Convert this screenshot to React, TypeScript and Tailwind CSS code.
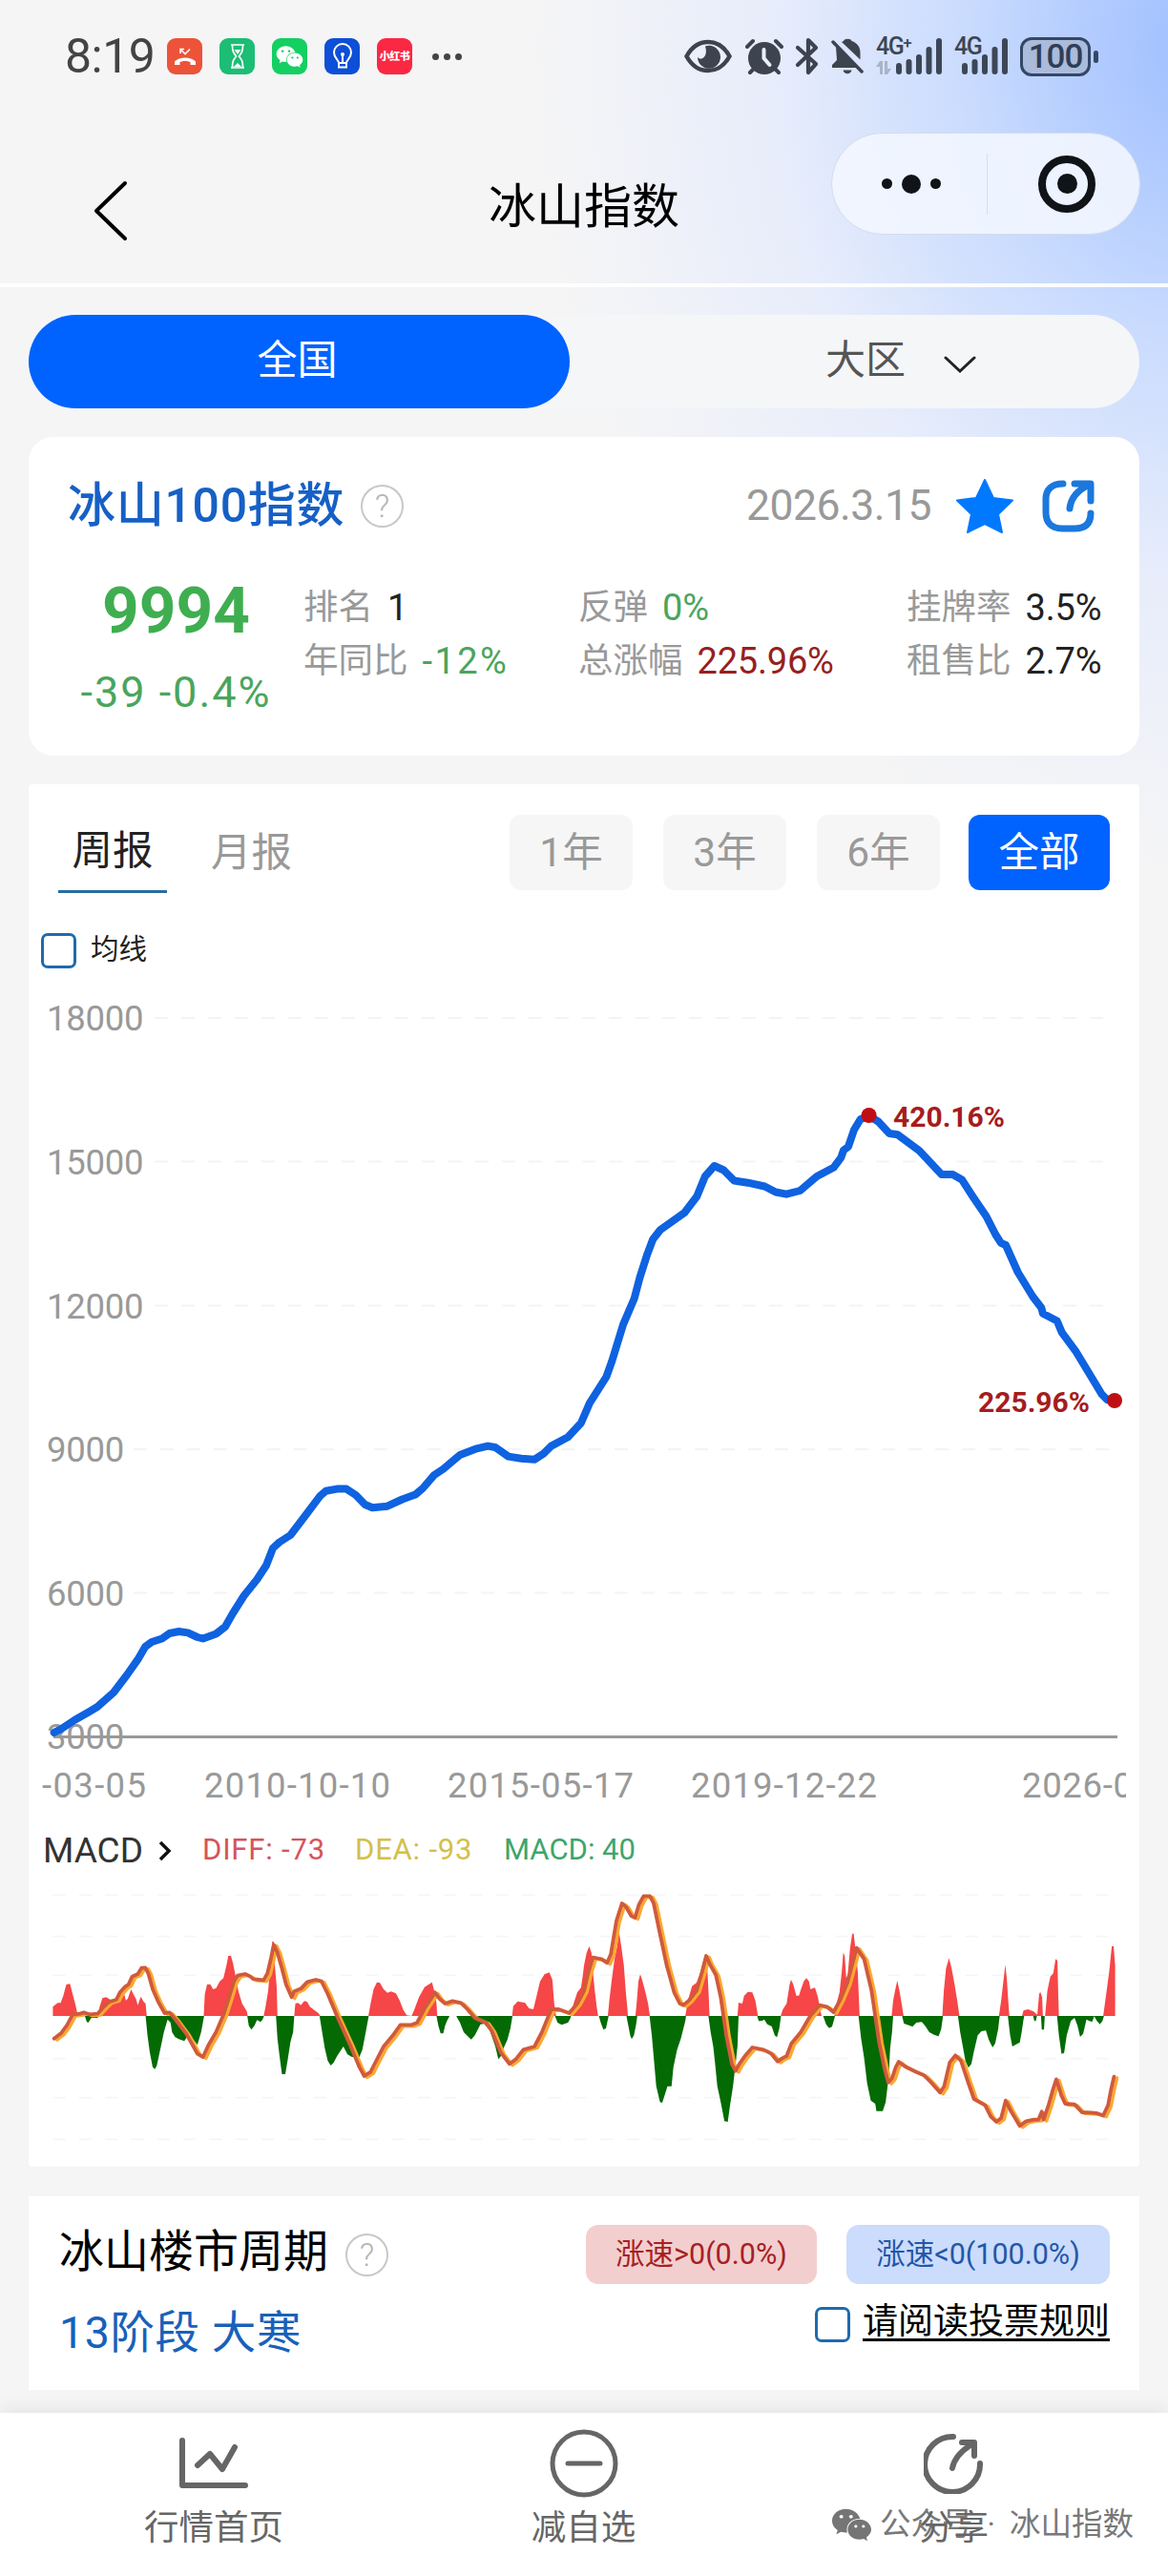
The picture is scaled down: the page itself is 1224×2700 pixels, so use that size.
import { ReactNode } from "react";
import clsx from "clsx";
import { FaWeixin } from "react-icons/fa";

type Point = [number, number]

const pricePoints : Point[] = [
    [56.6,1816],[64.4,1812],[78,1803],[93.7,1794],[102,1789],[119,1774],[132.7,1756],[144.4,1739.4],[152.2,1726],[159,1721],
    [169.8,1717.5],[177.6,1712],[187.4,1710],[197,1711.4],[206.9,1716],[212.7,1717.5],[226.4,1712.5],[236,1705],[244,1691],
    [255.7,1672.5],[269.3,1655.5],[279,1640.7],[286,1622.6],[292.7,1616.5],[304.4,1609],[320,1588.5],[335.7,1567.7],[341.5,1562.8],
    [353.2,1560.6],[363,1560.6],[372.8,1567],[382.5,1577],[390.3,1580.3],[406,1578.7],[421.5,1571.5],[435.2,1566.6],[443,1560],
    [454.7,1546.3],[464.5,1539.7],[482,1525],[499.6,1518.3],[511.3,1515.6],[519,1517],[532.8,1526.6],[546.4,1528.8],[560,1529.8],
    [569.9,1523.3],[577.7,1515.6],[595.2,1506.3],[608.9,1491.5],[617.9,1470.6],[635.4,1443.2],[641.3,1426.7],[653,1388.3],
    [664.7,1361],[670.5,1339],[678.4,1314.3],[684.2,1299],[692,1289],[703.7,1280.8],[717.4,1271],[730.3,1254],[738.9,1233],
    [748.6,1222],[758.4,1226.5],[769.3,1237.5],[783.7,1239.7],[801.3,1243.5],[813,1249.5],[824,1251.7],[838.4,1248],[856,1233],
    [873.5,1223.8],[881.3,1213.3],[884,1205.7],[889,1201.8],[895,1184.3],[901.6,1173.3],[910.6,1169.5],[920.3,1175.5],[932,1188],
    [940.6,1189.2],[963.3,1206],[986.7,1231],[998.4,1231],[1008,1236.4],[1020,1255],[1033.5,1274.8],[1043.3,1294],[1049,1302.8],
    [1054,1305],[1066.7,1333.5],[1082.3,1359],[1091.3,1370.8],[1092.9,1376.8],[1107.7,1384.5],[1112.8,1396.6],[1127,1415.8],
    [1154.5,1461.3],[1160.4,1467.3],[1168,1468.4],
]

const yLabels = [
    { text: "18000", y: 1067 },
    { text: "15000", y: 1217.5 },
    { text: "12000", y: 1368.5 },
    { text: "9000", y: 1519 },
    { text: "6000", y: 1669.5 },
    { text: "3000", y: 1820 },
]

const xLabels = [
    { text: "-03-05", x: 44, w: 109 },
    { text: "2010-10-10", x: 214, w: 195 },
    { text: "2015-05-17", x: 469, w: 195 },
    { text: "2019-12-22", x: 724, w: 195 },
    { text: "2026-0", x: 1071, w: 116 },
]

// every area starts and ends on the zero line (y = 639)
const macdUp = [
    "142,639 142,610 155,598 163,598 170,575 178,540 188,538 195,570 203,605 209,639",
    "263,639 267,612 275,583 285,580 300,590 310,600 325,565 332,563 338,590 343,585 352,555 358,570 365,585 370,605 378,578 386,595 391,600 394,639",
    "547,639 550,570 556,540 565,540 572,555 580,552 590,530 600,520 608,480 613,450 620,450 625,470 632,510 640,560 650,600 663,625 665,639",
    "708,639 713,610 720,560 726,480 731,405 735,405 738,480 743,550 745,639",
    "790,639 793,600 800,598 808,605 817,592 825,595 832,610 845,622 855,630 860,639",
    "989,639 995,600 1003,555 1012,533 1020,535 1030,555 1040,566 1050,562 1063,568 1073,590 1083,620 1092,637 1105,639 1112,620 1125,580 1140,548 1160,533 1168,570 1172,600 1174,639",
    "1375,639 1378,608 1390,593 1410,598 1420,615 1432,618 1440,580 1450,530 1462,508 1475,502 1483,525 1488,600 1493,639",
    "1532,639 1540,600 1550,565 1560,550 1565,510 1568,480 1575,440 1582,420 1588,440 1592,500 1597,560 1602,610 1606,639",
    "1632,639 1636,590 1642,530 1650,460 1657,420 1662,375 1668,420 1675,480 1680,560 1684,610 1686,639",
    "1706,639 1710,590 1714,530 1719,508 1724,525 1733,565 1740,600 1745,639",
    "1840,639 1847,590 1858,545 1870,535 1880,505 1890,460 1897,450 1900,510 1903,580 1905,639",
    "1980,639 1983,597 1993,600 1998,575 2008,563 2020,565 2028,590 2035,639",
    "2096,639 2102,618 2112,600 2120,540 2124,525 2130,540 2138,575 2145,575 2152,550 2158,530 2165,520 2172,530 2176,555 2188,550 2196,580 2202,620 2206,639",
    "2240,639 2246,600 2254,565 2260,500 2264,440 2268,450 2272,520 2276,510 2282,430 2288,380 2292,380 2298,440 2303,500 2308,639",
    "2394,639 2398,590 2403,560 2409,528 2415,560 2420,595 2426,639",
    "2530,639 2534,560 2540,490 2548,457 2555,490 2563,540 2570,590 2576,639",
    "2682,639 2688,590 2695,520 2699,478 2703,520 2707,590 2710,639",
    "2744,639 2748,622 2760,618 2775,625 2785,635 2790,570 2793,563 2798,580 2800,639",
    "2806,639 2812,560 2820,515 2828,505 2834,460 2839,465 2841,560 2843,639",
    "2962,639 2970,570 2978,500 2985,420 2990,420 2994,480 2994,639",
]

const macdDown = [
    "228,639 232,655 236,661 240,655 245,645 262,645 265,639",
    "391,639 396,700 402,752 410,800 416,806 421,795 432,735 440,690 450,650 458,660 462,690 470,705 480,712 495,718 505,700 520,715 530,730 540,690 548,639",
    "664,639 668,670 675,682 683,670 690,652 700,658 705,650 709,639",
    "741,639 745,710 750,760 757,822 766,822 772,780 780,720 787,690 790,639",
    "858,639 865,690 872,740 880,780 888,795 896,785 905,765 922,735 933,760 945,768 965,768 973,745 982,690 990,639",
    "1172,639 1177,670 1183,694 1190,694 1195,670 1200,655 1207,639",
    "1225,639 1235,660 1245,690 1265,713 1275,700 1290,665 1300,664 1315,685 1330,735 1338,775 1345,765 1352,740 1362,715 1370,680 1376,639",
    "1490,639 1497,660 1508,667 1525,660 1532,645 1533,639",
    "1608,639 1613,660 1620,682 1627,678 1632,650 1634,639",
    "1682,639 1687,670 1692,700 1696,712 1702,700 1708,665 1711,639",
    "1744,639 1750,700 1756,780 1762,860 1772,910 1778,912 1784,890 1792,860 1803,860 1808,800 1818,745 1828,710 1840,655 1842,639",
    "1902,639 1908,690 1915,735 1920,790 1926,860 1935,910 1945,970 1954,972 1960,920 1968,860 1975,790 1980,735 1983,639",
    "2033,639 2037,655 2045,655 2052,650 2060,665 2072,672 2080,700 2086,706 2092,680 2097,639",
    "2210,639 2218,665 2226,677 2234,673 2242,639",
    "2305,639 2312,710 2320,770 2328,850 2338,905 2350,915 2353,938 2370,938 2378,910 2386,830 2390,740 2395,690 2398,639",
    "2422,639 2427,663 2440,668 2450,673 2460,660 2475,658 2485,672 2495,690 2508,698 2520,703 2527,680 2532,639",
    "2572,639 2578,690 2585,735 2592,780 2600,802 2608,790 2615,750 2625,700 2635,687 2647,685 2655,715 2665,738 2672,725 2680,680 2684,639",
    "2706,639 2712,700 2718,735 2738,722 2743,690 2748,650 2750,639",
    "2774,639 2777,655 2781,655 2784,639",
    "2795,639 2797,682 2803,682 2805,639",
    "2838,639 2843,700 2850,758 2857,755 2864,700 2875,655 2885,645 2893,670 2900,705 2908,695 2917,650 2925,655 2932,658 2938,640 2945,655 2953,665 2960,655 2964,639",
]

const diffLine = "145,710 165,692 180,668 195,635 215,632 225,628 240,634 262,632 275,615 292,595 312,588 322,565 335,548 345,540 355,515 370,507 380,488 390,487 398,505 410,555 425,595 442,630 455,628 470,648 500,695 530,758 545,768 560,730 580,690 600,635 615,580 628,530 638,512 658,507 672,515 680,523 708,526 718,505 728,455 735,415 745,440 757,490 768,540 783,580 790,562 808,553 825,532 848,525 863,530 880,570 905,640 940,730 965,800 978,828 995,815 1010,780 1030,735 1055,700 1075,667 1105,667 1120,660 1140,615 1168,565 1180,585 1195,600 1215,592 1238,598 1255,618 1275,645 1305,660 1320,685 1345,755 1368,790 1385,775 1405,745 1435,735 1455,690 1480,618 1500,618 1528,630 1550,600 1568,560 1580,500 1592,455 1605,458 1615,460 1630,472 1640,445 1655,340 1670,285 1680,295 1695,325 1705,330 1715,290 1728,262 1745,262 1755,285 1770,370 1790,480 1810,565 1825,600 1835,605 1850,590 1870,560 1885,500 1896,450 1905,475 1922,510 1935,580 1950,700 1965,790 1975,812 1985,790 2000,765 2020,738 2050,745 2070,757 2088,782 2100,772 2112,765 2125,725 2150,690 2175,640 2200,605 2220,610 2238,627 2255,590 2275,535 2300,425 2320,460 2340,560 2360,720 2375,805 2385,848 2395,835 2405,800 2413,783 2430,798 2460,815 2480,825 2500,848 2524,880 2535,860 2550,785 2565,763 2580,780 2600,850 2615,900 2645,920 2660,955 2675,972 2688,960 2700,905 2715,940 2738,985 2755,970 2775,965 2788,965 2797,940 2802,965 2815,920 2827,870 2836,838 2850,890 2860,915 2885,917 2905,942 2930,943 2945,945 2962,952 2975,920 2983,870 2991,830"

const AppBadge = (props : { className : string, children : ReactNode }) => {
    return (
        <div className={clsx(["flex h-[38px] w-[37px] items-center justify-center overflow-hidden rounded-[9px] text-white", props.className])}>
            {props.children}
        </div>
    )
}

const SignalBars = () => {
    return (
        <svg width="48" height="40" viewBox="0 0 48 40" stroke="#3c4657" strokeWidth="6" strokeLinecap="round">
            <path d="M3 30v6M13.500 26v10M24 21v15M34.500 13v23M45 4v32" />
        </svg>
    )
}

const StatusBar = () => {
    return (
        <div className="flex h-[118px] items-center pl-[68px] pr-[73px]">
            <p className="mr-[14px] w-[93px] whitespace-nowrap text-[50px] tracking-[-0.5px] leading-none text-[#444]">8:19</p>
            <div className="flex gap-[18px]">
                <AppBadge className="bg-[#ec5338]">
                    <svg width="26" height="26" viewBox="0 0 26 26" fill="none" stroke="#fff" strokeWidth="1.600">
                        <path d="M8 10V5.500h4M8 5.500l5 5 5-5" />
                        <path d="M2 22v-3.500c5-5.500 17-5.500 22 0V22h-5.500v-3c-3-1.500-8-1.500-11 0v3z" fill="#fff" stroke="none" />
                    </svg>
                </AppBadge>
                <AppBadge className="bg-[#1cbd74]">
                    <svg width="20" height="30" viewBox="0 0 20 30" fill="none" stroke="#fff" strokeWidth="1.700">
                        <path d="M3 3h14M3 27h14M4.500 3c0 7 1 8 4 12-3 4-4 5-4 12M15.500 3c0 7-1 8-4 12 3 4 4 5 4 12" />
                        <path d="M6.500 8h7L10 13zM6 26l4-4 4 4z" fill="#fff" stroke="none" />
                    </svg>
                </AppBadge>
                <AppBadge className="bg-[#14cf62]"><FaWeixin size={29} /></AppBadge>
                <AppBadge className="bg-[#0d4fd6]">
                    <svg width="26" height="32" viewBox="0 0 26 32" fill="none" stroke="#fff" strokeWidth="2">
                        <path d="M9 23c0-3-5-5-5-11a9 9 0 0 1 18 0c0 6-5 8-5 11zM9 24v3.500h8V24M13 15v8" />
                        <circle cx="13" cy="14" r="2" fill="#fff" stroke="none" />
                    </svg>
                </AppBadge>
                <AppBadge className="bg-[#fb2844]">
                    <span className="whitespace-nowrap text-[11px] font-black leading-none tracking-[-0.5px]">小红书</span>
                </AppBadge>
            </div>
            <div className="ml-[21px] flex gap-[5px]">
                <i className="size-[7px] rounded-full bg-[#444]" />
                <i className="size-[7px] rounded-full bg-[#444]" />
                <i className="size-[7px] rounded-full bg-[#444]" />
            </div>
            <div className="ml-auto flex items-center">
                <svg width="50" height="36" viewBox="0 0 50 36" className="mr-[14px]">
                    <path d="M2.500 18C8 8 16 3 25 3s17 5 22.500 15C42 28 34 33 25 33S8 28 2.500 18z" fill="none" stroke="#3d444f" strokeWidth="4.500" />
                    <path d="M22 7.500a12 12 0 1 1-8 11c2 5 12 1 8-11z" fill="#3d444f" />
                </svg>
                <svg width="40" height="39" viewBox="0 0 40 39" className="mr-[12px]">
                    <circle cx="20" cy="21" r="17" fill="#3d444f" />
                    <path d="M2 9l6-6M38 9l-6-6M5 36l5-5M35 36l-5-5" stroke="#3d444f" strokeWidth="4" strokeLinecap="round" />
                    <path d="M19.500 12v9l6 7" fill="none" stroke="#e9effb" strokeWidth="4" strokeLinecap="round" />
                </svg>
                <svg width="26" height="40" viewBox="0 0 26 40" className="mr-[12px]" fill="none" stroke="#3d444f" strokeWidth="4.200" strokeLinejoin="round" strokeLinecap="round">
                    <path d="M3 11l19 17-8 9V3l8 8L3 29" />
                </svg>
                <svg width="34" height="40" viewBox="0 0 34 40" className="mr-[13px]" fill="#3d444f">
                    <path d="M5 10L27 32H1v-3l5-5zM13 4c1-3 8-3 8.500 0 6 2 9 6 9 13v6.500L11 5z" />
                    <path d="M2 5l30 31" stroke="#3d444f" strokeWidth="3.500" strokeLinecap="round" />
                    <path d="M12.500 34.500h9c-1 5-8 5-9 0z" />
                </svg>
                {/* sim 1 */}
                <div className="relative mr-[13px] flex w-[69px] justify-end">
                    <span className="absolute left-0 top-0 whitespace-nowrap text-[25px] font-medium leading-[20px] tracking-[-1.5px] text-[#3c4657]">4G<sup className="-top-[6px] text-[17px]">+</sup></span>
                    <svg width="16" height="14" viewBox="0 0 16 14" className="absolute left-0 top-[25px]" fill="#a9b4c8">
                        <path d="M4 0h3v14H4V6H0zM9 0h3v8h4l-4 6H9z" />
                    </svg>
                    <SignalBars />
                </div>
                {/* sim 2 */}
                <div className="relative mr-[13px] flex w-[56px] justify-end">
                    <span className="absolute left-0 top-0 text-[25px] font-medium leading-[20px] tracking-[-1.5px] text-[#3c4657]">4G</span>
                    <SignalBars />
                </div>
                <div className="flex h-[41px] w-[74px] items-center justify-center rounded-[12px] border-[3px] border-[#344767] bg-[#aabbdb]">
                    <span className="text-[35px] font-medium leading-none tracking-[-1px] text-[#2f3e58]">100</span>
                </div>
                <i className="ml-[3px] h-[13px] w-[5px] rounded-full bg-[#344767]" />
            </div>
        </div>
    )
}

const NavBar = () => {
    return (
        <div className="flex h-[179px] pl-[97px] pr-[29px]">
            <svg width="40" height="64" viewBox="0 0 40 64" className="mt-[71px]" fill="none" stroke="#000" strokeWidth="4" strokeLinecap="round" strokeLinejoin="round">
                <path d="M34 3L4 32l30 29" />
            </svg>
            <h1 className="ml-[375px] mt-[67px] w-[204px] whitespace-nowrap text-[50px] leading-[64px] text-black">冰山指数</h1>
            <div className="ml-auto mt-[21px] flex h-[107px] w-[324px] items-center rounded-full border border-[#d3dcec] bg-[#f2f6ff]/90">
                <div className="flex w-[162px] items-center justify-center gap-[10px] pl-1">
                    <i className="size-[11px] rounded-full bg-[#101418]" />
                    <i className="size-[20px] rounded-full bg-[#101418]" />
                    <i className="size-[11px] rounded-full bg-[#101418]" />
                </div>
                <div className="h-[64px] w-px bg-[#d8deea]" />
                <div className="ml-[53px] flex size-[60px] items-center justify-center rounded-full border-[8px] border-[#101418]">
                    <i className="size-[21px] rounded-full bg-[#101418]" />
                </div>
            </div>
        </div>
    )
}

const HelpIcon = () => {
    return (
        <div className="flex size-[45px] items-center justify-center rounded-full border-2 border-[#c8c8c8] text-[34px] font-light leading-none text-[#b5b5b5]">?</div>
    )
}

const Checkbox = () => {
    return <div className="size-[37px] rounded-[7px] border-[3px] border-[#1f6aad]" />
}

const Stat = (props : { label : string, value : string, color : string }) => {
    return (
        <p className="flex h-[56px] items-center gap-[15px] whitespace-nowrap text-[36.500px] text-[#999]">
            {props.label}
            <span className={clsx(["text-[38px]", props.value.startsWith("-") ? "tracking-[2.4px]" : "tracking-[-0.2px]", props.color])}>{props.value}</span>
        </p>
    )
}

const SummaryCard = () => {
    return (
        <section className="mt-[30px] h-[334px] rounded-[26px] bg-white">
            <div className="flex h-[144px] items-center pl-[41px] pr-[46px]">
                <h2 className="mr-[18px] w-[289px] whitespace-nowrap text-[50px] font-medium leading-none tracking-[0.7px] text-[#1660c6]">冰山100指数</h2>
                <HelpIcon />
                <span className="ml-auto text-[44.500px] tracking-[-0.5px] text-[#999]">2026.3.15</span>
                <svg width="60" height="58" viewBox="0 0 60 58" className="ml-[26px]" fill="#0079ff" stroke="#0079ff" strokeWidth="2" strokeLinejoin="round">
                    <path d="M30 2l9 19 20 2.500-15 14.500 4 19L30 48l-18 9 4-19L1 23.500 21 21z" />
                </svg>
                <svg width="56" height="56" viewBox="0 0 56 56" className="ml-[30px]" fill="none" stroke="#1b78dd" strokeWidth="7" strokeLinecap="round" strokeLinejoin="round">
                    <path d="M22 5c-12 0-18 6-18 16v14c0 11 6 17 17 17h13c11 0 17-5 17-16" />
                    <path d="M34 5h17v18M49 6C37 12 30 20 29 31" />
                </svg>
            </div>
            <div className="flex">
                <div className="flex w-[288px] flex-col items-center pl-[21px]">
                    <p className="text-[67.500px] font-bold leading-[75px] text-[#3fae50]">9994</p>
                    <p className="mt-[17px] whitespace-nowrap text-[45px] leading-[64px] tracking-[2px] text-[#4aa55c]">-39 -0.4%</p>
                </div>
                <div className="mt-[7px] w-[288px]">
                    <Stat label="排名" value="1" color="text-[#222]" />
                    <Stat label="年同比" value="-12%" color="text-[#4aa55c]" />
                </div>
                <div className="mt-[7px] w-[344px]">
                    <Stat label="反弹" value="0%" color="text-[#4aa55c]" />
                    <Stat label="总涨幅" value="225.96%" color="text-[#96201f]" />
                </div>
                <div className="mt-[7px]">
                    <Stat label="挂牌率" value="3.5%" color="text-[#222]" />
                    <Stat label="租售比" value="2.7%" color="text-[#222]" />
                </div>
            </div>
        </section>
    )
}

const PriceChart = () => {
    return (
        <svg width="1137" height="860" viewBox="43 1040 1137 860" fontSize="36.500" fill="#999">
            {
                yLabels.map((label) => {
                    const left = label.text.length > 4 ? 162 : 140
                    return (
                        <g key={label.text}>
                            {label.y < 1800 && <path d={`M${left} ${label.y}H1170`} stroke="#f4f4f4" strokeWidth="2" strokeDasharray="14 14" />}
                            <text x="49" y={label.y + 13} textLength={label.text.length * 20.3}>{label.text}</text>
                        </g>
                    )
                })
            }
            <path d="M56 1820.500H1171" stroke="#999" strokeWidth="3" />
            {
                xLabels.map((label) => (
                    <text key={label.text} x={label.x} y="1884" textLength={label.w}>{label.text}</text>
                ))
            }
            <polyline points={pricePoints.join(" ")} fill="none" stroke="#0f62e0" strokeWidth="8" strokeLinejoin="round" strokeLinecap="round" />
            <circle cx="910.600" cy="1169" r="8" fill="#c00f14" />
            <circle cx="1168" cy="1468" r="8" fill="#c00f14" />
            <g fill="#a61c20" fontSize="30" fontWeight="700">
                <text x="936" y="1181" textLength="117">420.16%</text>
                <text x="1025" y="1480" textLength="117">225.96%</text>
            </g>
        </svg>
    )
}

const MacdChart = () => {
    return (
        <svg width="1137" height="280" viewBox="110.200 225 2913 840" preserveAspectRatio="none" fill="none">
            <path d="M142 259H2994M142 389H2994M142 511H2994M142 773H2994M142 896H2994M142 1027H2994" stroke="#f6f6f6" strokeWidth="5" strokeDasharray="34 36" />
            {macdDown.map((points, index) => <polygon key={index} points={points} fill="#046a04" />)}
            {macdUp.map((points, index) => <polygon key={index} points={points} fill="#f64647" />)}
            <g strokeLinejoin="round" strokeLinecap="round">
                <polyline points={diffLine} transform="translate(8 4)" stroke="#fba831" strokeWidth="3.500" vectorEffect="non-scaling-stroke" />
                <polyline points={diffLine} stroke="#d05a3c" strokeWidth="3.800" vectorEffect="non-scaling-stroke" />
            </g>
        </svg>
    )
}

const ChartCard = () => {
    return (
        <section className="mt-[30px] h-[1449px] rounded-[4px] bg-white pl-[13px]">
            <div className="flex h-[143px] pl-[18px] pr-[31px] pt-[32px] text-[42.500px] text-[#999]">
                <div className="flex h-[82px] w-[114px] items-center justify-center border-b-[3px] border-[#2b6c9f] pb-[4px] text-[#222]">周报</div>
                <div className="flex h-[82px] items-center pb-[2px] pl-[46px]">月报</div>
                <div className="ml-auto flex gap-[32px]">
                    {
                        ["1年", "3年", "6年"].map((range) => (
                            <div key={range} className="flex h-[79px] w-[129px] items-center justify-center rounded-[12px] bg-[#f6f6f6]">{range}</div>
                        ))
                    }
                    <div className="-ml-[2px] flex h-[79px] w-[148px] items-center justify-center rounded-[12px] bg-[#0062ff] text-white">全部</div>
                </div>
            </div>
            <div className="flex h-[75px] pt-[13px]">
                <Checkbox />
                <span className="ml-[15px] text-[29.500px] leading-[35px] text-[#222]">均线</span>
            </div>
            <PriceChart />
            <div className="flex h-[75px] items-center whitespace-nowrap pl-[2px] pt-[4px] text-[31px] tracking-[0.8px]">
                <span className="w-[107px] text-[37px] tracking-normal text-[#333]">MACD</span>
                <svg width="14" height="22" viewBox="0 0 14 22" className="ml-[14px] mr-[32px]" fill="none" stroke="#111" strokeWidth="3.500">
                    <path d="M2 2l9 9-9 9" />
                </svg>
                <span className="w-[160px] text-[#d4555a]">DIFF: -73</span>
                <span className="w-[156px] text-[#d3c04a]">DEA: -93</span>
                <span className="tracking-normal text-[#3fa56c]">MACD: 40</span>
            </div>
            <MacdChart />
        </section>
    )
}

const CycleCard = () => {
    return (
        <section className="mt-[31px] h-[203px] bg-white pl-[32px] pr-[31px] pt-[30px]">
            <div className="flex h-[62px] items-center">
                <h2 className="mr-[18px] whitespace-nowrap pb-[8px] text-[47px] leading-none text-black">冰山楼市周期</h2>
                <HelpIcon />
                <div className="ml-auto flex h-[62px] w-[242px] items-center justify-center whitespace-nowrap rounded-[13px] bg-[#f3cece] text-[30.500px] text-[#a52024]">涨速&gt;0(0.0%)</div>
                <div className="ml-[31px] flex h-[62px] w-[276px] items-center justify-center whitespace-nowrap rounded-[13px] bg-[#cbdcfc] text-[30.500px] text-[#2357a8]">涨速&lt;0(100.0%)</div>
            </div>
            <div className="flex h-[80px] items-start justify-between">
                <p className="mt-[18px] whitespace-nowrap text-[46.500px] leading-[66px] tracking-[0.6px] text-[#1861b9]">13阶段 大寒</p>
                <div className="mt-[24px] flex">
                    <Checkbox />
                    <span className="ml-[13px] h-[36px] border-b-[3px] border-black text-[37px] leading-[32px] text-black">请阅读投票规则</span>
                </div>
            </div>
        </section>
    )
}

const TabItem = (props : { label : string, className : string, children : ReactNode }) => {
    return (
        <div className={clsx(["flex flex-col items-center text-[36.500px] leading-[47px] text-[#666]", props.className])}>
            <div className="flex h-[97px] items-center pt-[9px]">{props.children}</div>
            <span className="whitespace-nowrap">{props.label}</span>
        </div>
    )
}

const TabBar = () => {
    return (
        <div className="relative mt-[24px] flex h-[171px] bg-white shadow-[0_-4px_18px_rgba(0,0,0,0.07)]">
            <TabItem label="行情首页" className="w-[448px]">
                <svg width="74" height="54" viewBox="0 0 74 54" fill="none" stroke="#666" strokeWidth="6" strokeLinecap="round" strokeLinejoin="round">
                    <path d="M4 3v47h66M20 29l13-12 13 16L59 10" />
                </svg>
            </TabItem>
            <TabItem label="减自选" className="w-[327px]">
                <svg width="72" height="72" viewBox="0 0 72 72" fill="none" stroke="#666" strokeWidth="5" strokeLinecap="round">
                    <circle cx="36" cy="36" r="33" />
                    <path d="M19 36h34" />
                </svg>
            </TabItem>
            <TabItem label="分享" className="w-[449px]">
                <svg width="64" height="64" viewBox="0 0 64 64" fill="none" stroke="#666" strokeWidth="6" strokeLinecap="round" strokeLinejoin="round">
                    <path d="M31 4a29 29 0 1 0 28 28" />
                    <path d="M40 10h13v14M52 11C40 18 32 26 30 37" />
                </svg>
            </TabItem>
            <div className="absolute right-[36px] top-[93px] flex items-center whitespace-nowrap text-[32.500px] leading-[48px] [word-spacing:7px] text-[#666]/90">
                <FaWeixin size={43} className="mr-[8px]" />
                公众号 · 冰山指数
            </div>
        </div>
    )
}

export default function App() {
    return (
        <div className="flex h-[2700px] w-[1224px] flex-col overflow-hidden bg-[#f5f5f5] bg-[radial-gradient(ellipse_700px_860px_at_1260px_50px,#9dbeff_0%,#c9dbfe_35%,#e8edfb_65%,#f5f5f6_100%)] font-[Roboto,'Noto_Sans_CJK_SC',sans-serif]">
            <StatusBar />
            <NavBar />
            <div className="h-[4px] bg-white/90" />
            <main className="px-[30px] pt-[29px]">
                <div className="flex h-[98px] rounded-full bg-[#f5f6f8] text-[42px]">
                    <div className="flex w-[567px] items-center justify-center rounded-full bg-[#0062ff] pr-[4px] pb-[4px] text-white">全国</div>
                    <div className="flex flex-1 items-center justify-center pb-[4px] pl-[97px] text-[#555]">
                        大区
                        <svg width="34" height="20" viewBox="0 0 34 20" className="ml-[40px] mt-[10px]" fill="none" stroke="#222" strokeWidth="3" strokeLinecap="round">
                            <path d="M2 3l15 14L32 3" />
                        </svg>
                    </div>
                </div>
                <SummaryCard />
                <ChartCard />
                <CycleCard />
            </main>
            <TabBar />
        </div>
    )
}
